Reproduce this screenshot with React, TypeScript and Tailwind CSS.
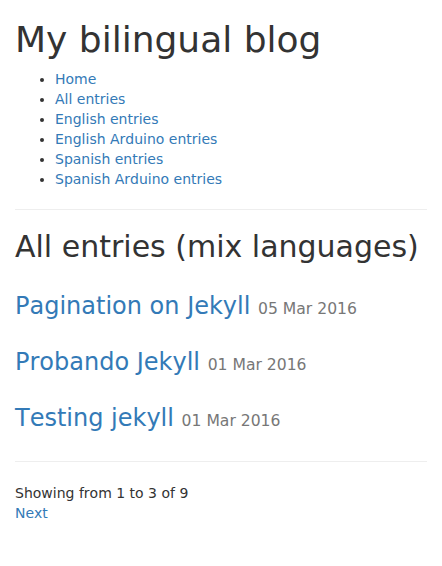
import React from "react";

const links = [
  "Home",
  "All entries",
  "English entries",
  "English Arduino entries",
  "Spanish entries",
  "Spanish Arduino entries",
];

const posts = [
  { title: "Pagination on Jekyll", date: "05 Mar 2016" },
  { title: "Probando Jekyll", date: "01 Mar 2016" },
  { title: "Testing jekyll", date: "01 Mar 2016" },
];

const App: React.FC<{}> = () => {
  return (
    <div className="min-h-screen bg-white px-[15px] font-['DejaVu_Sans',sans-serif] text-[14px] leading-[20px] text-[#333] [font-kerning:none]">
      <h1 className="mt-[20px] mb-[10px] text-[36px] leading-[39px] font-normal">
        My bilingual blog
      </h1>
      <ul className="mb-[10px] list-disc pl-[40px]">
        {links.map((l) => (
          <li key={l}>
            <a href="#" className="text-[#337ab7]">
              {l}
            </a>
          </li>
        ))}
      </ul>
      <hr className="my-[20px] border-0 border-t border-[#eee]" />
      <h2 className="mt-[20px] mb-[10px] text-[30px] leading-[33px] font-normal">
        All entries (mix languages)
      </h2>
      <div className="flex flex-col">
        {posts.map((p) => (
          <h3
            key={p.title}
            className="mt-[20px] mb-[10px] text-[24px] leading-[26px] font-normal"
          >
            <a href="#" className="text-[#337ab7]">
              {p.title}
            </a>{" "}
            <small className="text-[65%] leading-none text-[#777]">
              {p.date}
            </small>
          </h3>
        ))}
      </div>
      <hr className="my-[20px] border-0 border-t border-[#eee]" />
      <p className="pt-[1px]">Showing from 1 to 3 of 9</p>
      <a href="#" className="text-[#337ab7]">
        Next
      </a>
    </div>
  );
};

export default App;
